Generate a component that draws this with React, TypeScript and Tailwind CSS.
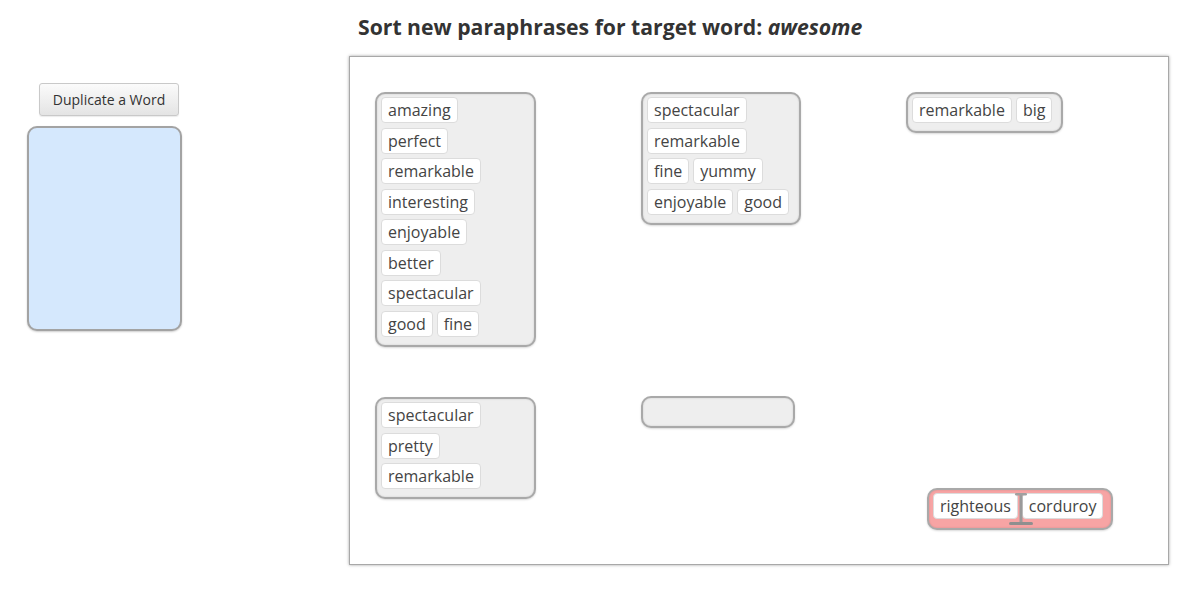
import React from "react";

const Chip = ({ t }: { t: string }) => (
  <span className="inline-flex h-[26px] items-center rounded-[4px] border border-[#dcdcdc] bg-white px-[6px] text-[16px] leading-[24px] text-[#444]">
    {t}
  </span>
);

const Group = ({
  rows,
  w,
  h,
  pink,
}: {
  rows: string[][];
  w: string;
  h: string;
  pink?: boolean;
}) => (
  <div
    className={`${w} ${h} ${pink ? "bg-[#f7a4a4]" : "bg-[#eeeeee]"} flex flex-col gap-y-[4.5px] rounded-[10px] border-2 border-[#a9a9a9] pl-[4px] pt-[3px] shadow-[inset_0_0_2px_rgba(0,0,0,0.15),0_1px_2px_rgba(0,0,0,0.15)]`}
  >
    {rows.map((r, i) => (
      <div key={i} className="flex gap-x-[4px]">
        {r.map((c) => (
          <Chip key={c} t={c} />
        ))}
      </div>
    ))}
  </div>
);

export default function App() {
  return (
    <div
      className="flex h-[598px] w-[1194px] bg-white"
      style={{ fontFamily: '"Open Sans", sans-serif' }}
    >
      <div className="flex w-[349px] shrink-0 flex-col items-start pl-[27px] pt-[83px]">
        <button className="ml-[12px] h-[33px] w-[140px] rounded-[3px] border border-[#c9c9c9] bg-gradient-to-b from-[#fbfbfb] to-[#e4e4e4] text-[14px] text-[#333] shadow-[0_1px_1px_rgba(0,0,0,0.08)]">
          Duplicate a Word
        </button>
        <div className="mt-[10px] h-[205px] w-[155px] rounded-[10px] border-2 border-[#a3a3a3] bg-[#d5e8fd] shadow-[0_1px_2px_rgba(0,0,0,0.2)]" />
      </div>
      <div className="flex flex-col">
        <h1 className="ml-[9px] mt-[12px] h-[32px] text-[21.2px] font-bold leading-[29px] text-[#333]">
          Sort new paraphrases for target word: <i>awesome</i>
        </h1>
        <div className="relative mt-[12px] h-[509px] w-[820px] border border-[#a8a8a8] bg-white pl-[25px] pt-[35px] shadow-[0_0_3px_rgba(0,0,0,0.35)]">
          <div className="grid grid-cols-[266px_265px_auto] grid-rows-[305px_auto] items-start">
            <Group
              w="w-[161px]"
              h="h-[255px]"
              rows={[
                ["amazing"],
                ["perfect"],
                ["remarkable"],
                ["interesting"],
                ["enjoyable"],
                ["better"],
                ["spectacular"],
                ["good", "fine"],
              ]}
            />
            <Group
              w="w-[160px]"
              h="h-[133px]"
              rows={[["spectacular"], ["remarkable"], ["fine", "yummy"], ["enjoyable", "good"]]}
            />
            <Group w="w-[157px]" h="h-[41px]" rows={[["remarkable", "big"]]} />
            <Group
              w="w-[161px]"
              h="h-[102px]"
              rows={[["spectacular"], ["pretty"], ["remarkable"]]}
            />
            <div className="-mt-px">
              <Group w="w-[154px]" h="h-[32px]" rows={[]} />
            </div>
            <div />
          </div>
          <div className="absolute left-[577px] top-[431px]">
            <Group w="w-[186px]" h="h-[42px]" pink rows={[["righteous", "corduroy"]]} />
            <svg
              className="absolute left-[82px] top-[4px]"
              width="24"
              height="36"
              viewBox="0 0 24 36"
            >
              <rect x="10.5" y="2" width="3" height="29" fill="#9a9a9a" />
              <rect x="6" y="1" width="12" height="2.5" rx="1.2" fill="#a0a0a0" />
              <rect x="0" y="30" width="24" height="3" rx="1.5" fill="#8f8f8f" />
            </svg>
          </div>
        </div>
      </div>
    </div>
  );
}
